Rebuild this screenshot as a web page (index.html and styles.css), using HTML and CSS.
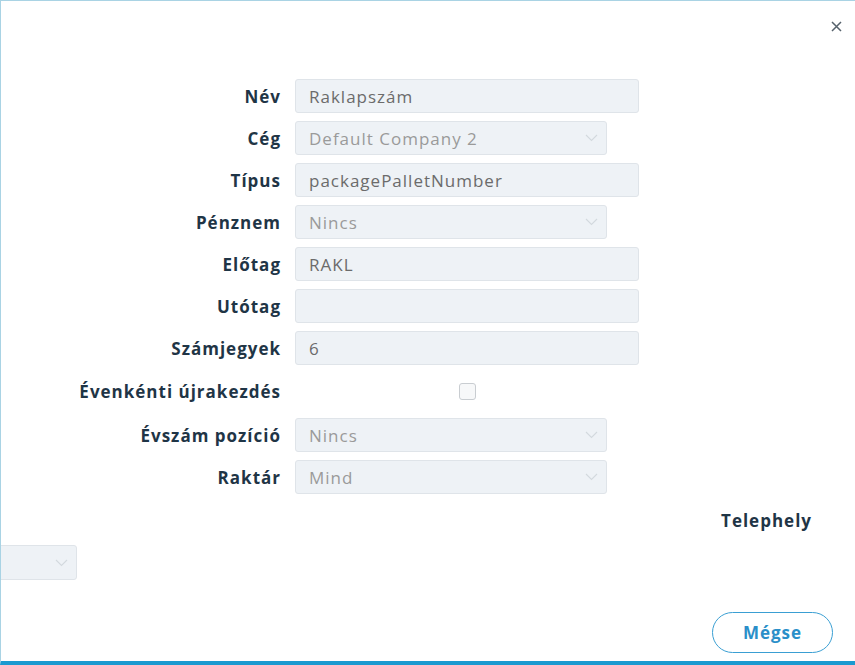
FILE: index.html
```html
<!DOCTYPE html>
<html lang="hu">
<head>
<meta charset="utf-8">
<title>Raklapszám</title>
<link rel="stylesheet" href="styles.css">
</head>
<body>
<div class="modal">
  <div class="header">
    <button class="close" aria-label="Bezárás">
      <svg width="11" height="11" viewBox="0 0 11 11"><path d="M1 1L10 10M10 1L1 10" stroke="#56626c" stroke-width="1.5" fill="none"/></svg>
    </button>
  </div>
  <div class="form">
    <label class="lbl">Név</label>
    <div class="input">Raklapszám</div>

    <label class="lbl">Cég</label>
    <div class="select">Default Company 2<svg class="chev" width="13" height="8" viewBox="0 0 13 8"><path d="M1 1L6.5 6.5L12 1" stroke="#d3d9de" stroke-width="1.1" fill="none"/></svg></div>

    <label class="lbl">Típus</label>
    <div class="input">packagePalletNumber</div>

    <label class="lbl">Pénznem</label>
    <div class="select">Nincs<svg class="chev" width="13" height="8" viewBox="0 0 13 8"><path d="M1 1L6.5 6.5L12 1" stroke="#d3d9de" stroke-width="1.1" fill="none"/></svg></div>

    <label class="lbl">Előtag</label>
    <div class="input">RAKL</div>

    <label class="lbl">Utótag</label>
    <div class="input"></div>

    <label class="lbl">Számjegyek</label>
    <div class="input">6</div>

    <label class="lbl tall">Évenkénti újrakezdés</label>
    <div class="check-cell"><span class="checkbox"></span></div>

    <label class="lbl">Évszám pozíció</label>
    <div class="select">Nincs<svg class="chev" width="13" height="8" viewBox="0 0 13 8"><path d="M1 1L6.5 6.5L12 1" stroke="#d3d9de" stroke-width="1.1" fill="none"/></svg></div>

    <label class="lbl">Raktár</label>
    <div class="select">Mind<svg class="chev" width="13" height="8" viewBox="0 0 13 8"><path d="M1 1L6.5 6.5L12 1" stroke="#d3d9de" stroke-width="1.1" fill="none"/></svg></div>
  </div>

  <div class="site-row">
    <span class="site-label">Telephely</span>
  </div>
  <div class="site-select-row">
    <div class="select site-select"><svg class="chev" width="13" height="8" viewBox="0 0 13 8"><path d="M1 1L6.5 6.5L12 1" stroke="#d3d9de" stroke-width="1.1" fill="none"/></svg></div>
  </div>

  <div class="footer">
    <button class="btn-cancel">Mégse</button>
  </div>
</div>
</body>
</html>
```

FILE: styles.css
```css
* { box-sizing: border-box; }
html, body { margin: 0; padding: 0; }
body {
  width: 855px;
  height: 665px;
  overflow: hidden;
  background: #ffffff;
  font-family: "Open Sans", "Noto Sans", sans-serif;
}
.modal {
  width: 855px;
  height: 665px;
  border-top: 1px solid #a9d3e4;
  border-left: 1px solid #a9d3e4;
  border-bottom: 4px solid #1a9ad0;
  display: flex;
  flex-direction: column;
  overflow: hidden;
}
.header {
  height: 78px;
  display: flex;
  justify-content: flex-end;
  align-items: flex-start;
  padding: 20px 13px 0 0;
}
.close {
  border: none;
  background: none;
  padding: 0;
  width: 11px;
  height: 11px;
  display: flex;
  cursor: pointer;
}
.form {
  display: grid;
  grid-template-columns: 280px 344px;
  column-gap: 14px;
  row-gap: 8px;
  align-items: center;
  padding-top: 0;
}
.lbl {
  text-align: right;
  font-weight: 700;
  font-size: 17px;
  letter-spacing: 1px;
  color: #1f3546;
  white-space: nowrap;
}
.tall { height: 37px; line-height: 37px; }
.input, .select {
  height: 34px;
  background: #eef2f6;
  border: 1px solid #dfe4e9;
  border-radius: 3px;
  padding: 0 13px;
  display: flex;
  align-items: center;
  font-size: 17px;
  letter-spacing: 1px;
  color: #6b6b6b;
}
.select {
  width: 312px;
  justify-content: space-between;
  color: #9a9a9a;
}
.chev { flex: none; margin-right: -5px; }
.check-cell {
  height: 37px;
  display: flex;
  align-items: center;
  padding-left: 164px;
}
.checkbox {
  width: 17px;
  height: 17px;
  border: 1px solid #c9cdd1;
  border-radius: 3px;
  background: #f7f8f9;
}
.site-row {
  display: flex;
  justify-content: flex-end;
  padding: 15px 43px 0 0;
}
.site-label {
  font-weight: 700;
  font-size: 17px;
  letter-spacing: 1px;
  color: #1f3546;
  line-height: 24px;
}
.site-select-row {
  display: flex;
  padding-top: 12px;
}
.site-select {
  margin-left: -236px;
  height: 35px;
  justify-content: flex-end;
}
.footer {
  display: flex;
  justify-content: flex-end;
  padding: 32px 22px 0 0;
}
.btn-cancel {
  width: 121px;
  height: 41px;
  border-radius: 21px;
  border: 1px solid #3a9fd3;
  background: #ffffff;
  color: #2a8fc9;
  font-family: "Open Sans", "Noto Sans", sans-serif;
  font-weight: 700;
  font-size: 17px;
  letter-spacing: 1px;
  cursor: pointer;
}
```
